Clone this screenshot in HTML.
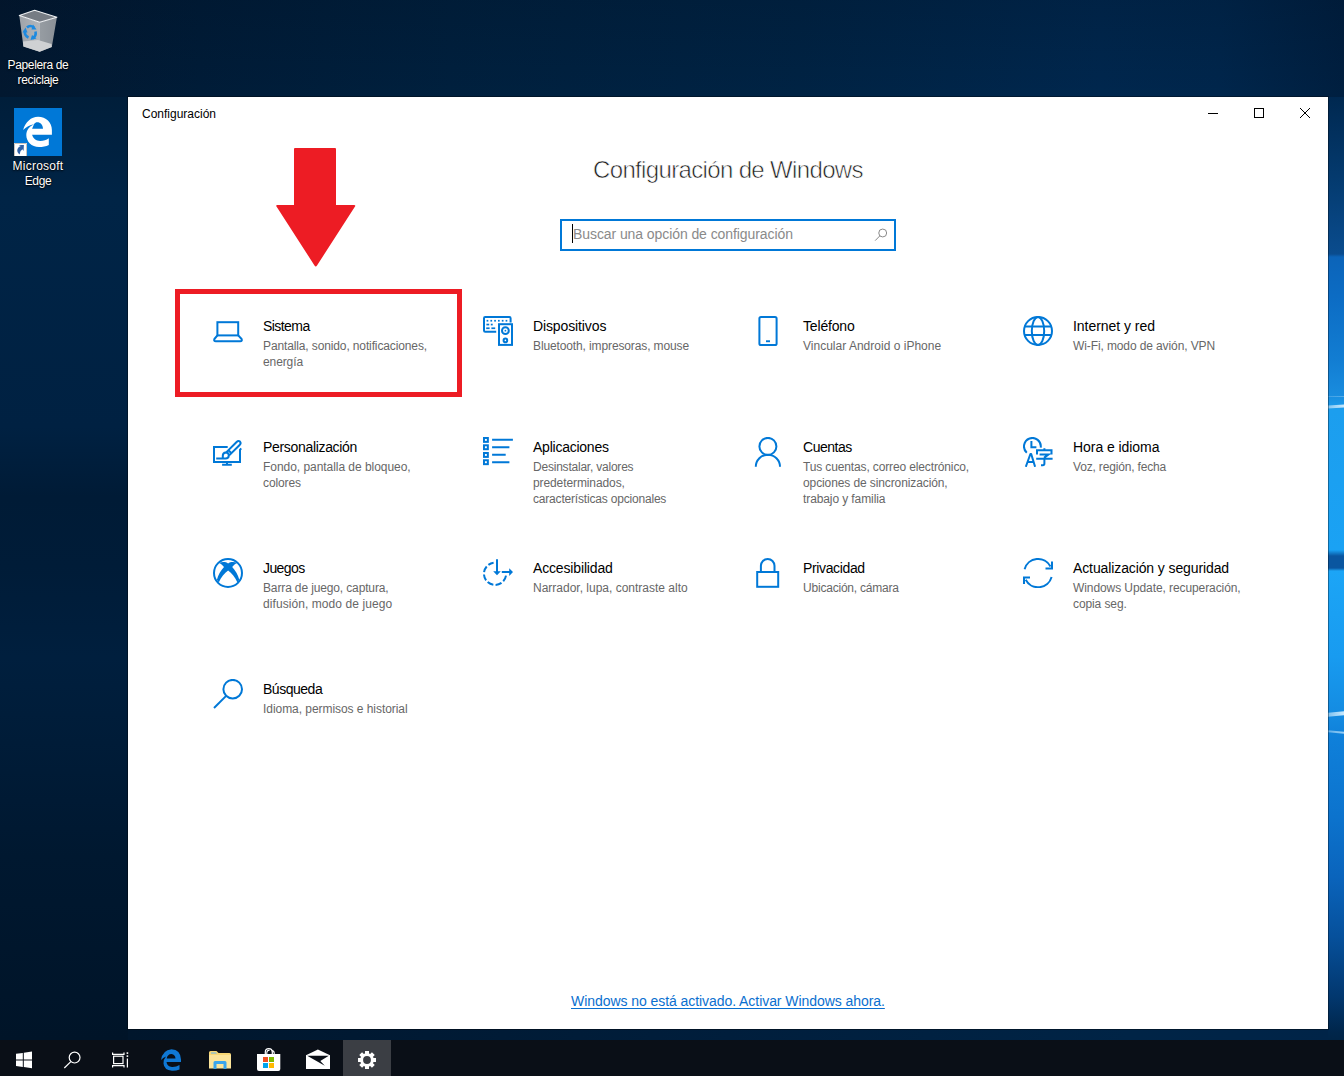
<!DOCTYPE html>
<html><head><meta charset="utf-8">
<style>
*{margin:0;padding:0;box-sizing:border-box}
html,body{width:1344px;height:1076px;overflow:hidden}
body{position:relative;font-family:"Liberation Sans",sans-serif;background:#04203f}
.abs{position:absolute}
#bg{position:absolute;left:0;top:0;width:1344px;height:1076px;background:#00203f}
#topstrip{position:absolute;left:0;top:0;width:1344px;height:97px;
 background:linear-gradient(180deg,rgba(0,6,16,0.14) 0%,rgba(0,0,0,0) 100%),
 linear-gradient(90deg,rgb(2,24,48) 0px,rgb(0,28,56) 200px,rgb(0,32,62) 450px,rgb(0,35,68) 800px,rgb(0,39,78) 1100px,rgb(0,38,76) 1220px,rgb(0,31,64) 1344px)}
#leftstrip{position:absolute;left:0;top:97px;width:128px;height:943px;
 background:linear-gradient(180deg,rgb(0,30,58) 0px,rgb(0,36,70) 100px,rgb(0,33,66) 330px,rgb(0,27,54) 400px,rgb(0,28,56) 470px,rgb(0,31,62) 560px,rgb(0,24,48) 760px,rgb(0,20,40) 943px)}
#botstrip{position:absolute;left:128px;top:1029px;width:1216px;height:11px;
 background:linear-gradient(90deg,rgb(0,22,44) 0px,rgb(0,30,60) 600px,rgb(0,36,70) 1000px,rgb(0,36,72) 1216px)}
#rstrip{position:absolute;left:1328px;top:97px;width:16px;height:943px;
 background:linear-gradient(180deg,rgb(0,40,80) 0px,rgb(4,58,110) 80px,rgb(10,76,142) 157px,rgb(12,100,185) 160px,rgb(12,108,196) 200px,rgb(18,125,210) 262px,rgb(25,140,222) 298px,rgb(28,158,238) 313px,rgb(26,162,244) 453px,rgb(10,86,160) 459px,rgb(10,86,160) 471px,rgb(28,165,246) 474px,rgb(24,155,240) 560px,rgb(20,140,226) 615px,rgb(15,128,218) 640px,rgb(12,115,205) 720px,rgb(10,100,188) 780px,rgb(6,80,155) 840px,rgb(2,55,110) 900px,rgb(0,38,75) 935px,rgb(0,36,70) 943px)}
.beam{position:absolute;left:1328px;width:16px;height:3px;background:linear-gradient(90deg,rgba(170,215,245,.7),rgba(210,238,255,.95))}
.dlabel{position:absolute;width:76px;left:0;text-align:center;color:#fff;font-size:12px;line-height:15px;letter-spacing:-0.35px;text-shadow:0 1px 2px rgba(0,0,0,.9),0 0 1px #000}
#win{position:absolute;left:128px;top:97px;width:1200px;height:932px;background:#fff;box-shadow:0 0 0 1px rgba(0,0,0,.35)}
.t{position:absolute;white-space:nowrap}
.gt{position:absolute;white-space:nowrap;font-size:14px;line-height:20px;color:#000;letter-spacing:-0.15px}
.gs{position:absolute;white-space:nowrap;font-size:12px;line-height:16px;color:#676767;letter-spacing:-0.1px}
#taskbar{position:absolute;left:0;top:1040px;width:1344px;height:36px;background:#0a0f17}
</style></head><body>
<div id="bg"></div>
<div id="topstrip"></div><div id="leftstrip"></div><div id="botstrip"></div><div id="rstrip"></div>
<div class="beam" style="top:405px;height:3px;transform:skewY(-4deg)"></div>
<div class="beam" style="top:396px;height:1px;opacity:.35"></div>
<div class="beam" style="top:712px;height:4px;transform:skewY(-6deg)"></div>
<div class="beam" style="top:731px;height:2px;opacity:.75;transform:skewY(5deg)"></div>

<!-- desktop icons -->
<svg class="abs" style="left:10px;top:4px" width="56" height="52" viewBox="10 4 56 52">
 <defs>
  <linearGradient id="binb" x1="0" y1="0" x2="1" y2="0"><stop offset="0" stop-color="#9ea3a9"/><stop offset="0.55" stop-color="#b3b7bc"/><stop offset="0.56" stop-color="#969ca2"/><stop offset="1" stop-color="#8a9097"/></linearGradient>
 </defs>
 <path d="M19.3 15.5L23.4 46.4L39.7 51.8L51.8 46.9L56.9 17.2L39.7 22.3Z" fill="url(#binb)"/>
 <path d="M23 41.5L38 40L51.5 44L51.8 46.9L39.7 51.8L23.4 46.4Z" fill="#cfd1d3"/>
 <path d="M19.3 15.5L34.6 10.2L56.9 17.2L39.7 22.3Z" fill="#767c84" stroke="#eef0f2" stroke-width="1.1" stroke-linejoin="round"/>
 <g fill="none" stroke="#1d8ae0" stroke-width="2.6">
  <path d="M27 27.5Q30 24.5 34 27.5"/>
  <path d="M35.5 31.5Q36.5 36 32.5 38.5"/>
  <path d="M28.5 37.5Q24 35.5 25 30.5"/>
 </g>
 <g fill="#1d8ae0"><path d="M33 24.5L36.5 29.5L31.5 29.5Z"/><path d="M36.5 38.5L30.5 40L32 35Z"/><path d="M22.5 32.5L25.5 27.5L27.5 32.5Z"/></g>
</svg>
<div class="dlabel" style="top:58px">Papelera de<br>reciclaje</div>
<div class="abs" style="left:14px;top:108px;width:48px;height:48px;background:#0078d7"></div>
<svg class="abs" style="left:14px;top:108px" width="48" height="48" viewBox="0 0 48 48">
 <path fill-rule="evenodd" d="M9.1 21.9C11.5 14 17 8.7 24.1 8.7C32 8.7 37.9 14.5 37.9 22V26.8H18.1C19 30.5 22 33 26.3 33C29.5 33 32.5 32 34.8 30.3V37C32 38.4 28.5 39 25 39C17.5 39 12.3 33.5 12.3 27C12.3 22.5 15 18.5 20 16.2C16 17 12 19 9.1 21.9ZM20 16.2C21 14.8 22 14.3 23.2 14.3C26.5 14.3 28.8 17 29 20.7H18.1Z" fill="#fff"/>
 <rect x="0" y="35" width="13" height="13" fill="#fff"/>
 <path d="M0.5 48V35.5H12.5V48" fill="none" stroke="#c9c3bd" stroke-width="1"/>
 <path d="M5.6 46.5Q2.5 44 3.5 41Q4.5 38.5 6.8 38L4.6 37H9.9L9.6 43L8.4 41.2Q6 42.5 5.6 46.5Z" fill="#2f62a8"/>
</svg>
<div class="dlabel" style="top:159px"><span style="letter-spacing:0.25px">Microsoft</span><br>Edge</div>

<!-- window -->
<div id="win"></div>
<div class="t" style="left:142px;top:106px;font-size:12px;line-height:16px;color:#000">Configuración</div>
<svg class="abs" style="left:1200px;top:100px" width="120" height="30" viewBox="0 0 120 30">
 <path d="M8 13.5H18" stroke="#000" stroke-width="1" fill="none"/>
 <rect x="54.5" y="8.5" width="9" height="9" stroke="#000" stroke-width="1" fill="none"/>
 <path d="M100 8L110 18M110 8L100 18" stroke="#000" stroke-width="1" fill="none"/>
</svg>
<div class="t" style="left:593px;top:155px;font-size:24px;line-height:30px;color:#1e1e1e;-webkit-text-stroke:0.6px #fff;letter-spacing:-0.65px">Configuración de Windows</div>
<div class="abs" style="left:560px;top:219px;width:336px;height:32px;border:2px solid #0078d7;background:#fff"></div>
<div class="abs" style="left:572px;top:224px;width:1px;height:19px;background:#000"></div>
<div class="t" style="left:573px;top:225px;font-size:14px;line-height:18px;color:#8a8a8a;letter-spacing:-0.08px">Buscar una opción de configuración</div>
<svg class="abs" style="left:872px;top:226px" width="18" height="18" viewBox="0 0 18 18">
 <circle cx="10.7" cy="7" r="3.95" stroke="#8a8a8a" stroke-width="1" fill="none"/>
 <path d="M7.9 9.8L3.2 14.6" stroke="#8a8a8a" stroke-width="1" fill="none"/>
</svg>
<svg class="abs" style="left:270px;top:144px" width="92" height="128" viewBox="270 144 92 128">
 <path d="M295 148H335Q336 148 336 149V205H354Q356 205 355 206.5L317 265.5Q315.7 267.5 314.5 265.5L276.5 206.5Q275.5 205 277.5 205H294V149Q294 148 295 148Z" fill="#ed1c24"/>
</svg>
<div class="abs" style="left:175px;top:289px;width:287px;height:108px;border:5px solid #ed1c24"></div>
<!--GRID-->
<svg class="abs" style="left:213px;top:316px" width="30" height="30" viewBox="0 0 30 30"><rect x="4.4" y="6.2" width="20.8" height="13.2" stroke="#0078d7" stroke-width="2" fill="none"/>
<path d="M4.4 19.4L1.4 23Q0.6 25.3 2.8 25.3H27.2Q29.4 25.3 28.6 23L25.2 19.4" stroke="#0078d7" stroke-width="2" fill="none" stroke-linejoin="round"/></svg>
<div class="gt" style="left:263px;top:316px"><span style="letter-spacing:-0.568px">Sistema</span></div>
<div class="gs" style="left:263px;top:338px"><span style="letter-spacing:-0.125px">Pantalla, sonido, notificaciones,</span><br><span style="letter-spacing:-0.1px">energía</span></div>
<svg class="abs" style="left:483px;top:316px" width="30" height="30" viewBox="0 0 30 30"><path d="M13.2 15.8H2.2Q1 15.8 1 14.6V2.2Q1 1 2.2 1H26.4Q27.6 1 27.6 2.2V6.4" stroke="#0078d7" stroke-width="2" fill="none"/>
<g fill="#0078d7"><rect x="3.6" y="3.9" width="1.7" height="1.7"/><rect x="7.4" y="3.9" width="1.7" height="1.7"/><rect x="11.2" y="3.9" width="1.7" height="1.7"/><rect x="15" y="3.9" width="1.7" height="1.7"/><rect x="18.8" y="3.9" width="1.7" height="1.7"/><rect x="22.6" y="3.9" width="1.7" height="1.7"/>
<rect x="3.4" y="7.7" width="2.8" height="1.7"/><rect x="7.8" y="7.7" width="1.9" height="1.7"/>
<rect x="3.2" y="11.4" width="3.4" height="1.7"/><rect x="8.4" y="11.4" width="3.8" height="1.7"/></g>
<rect x="16" y="8.2" width="13" height="20.7" stroke="#0078d7" stroke-width="2" fill="none"/>
<circle cx="22.4" cy="14.7" r="3.4" stroke="#0078d7" stroke-width="2" fill="none" stroke-width="1.8"/><circle cx="22.4" cy="14.7" r="0.9" fill="#0078d7"/>
<circle cx="22.4" cy="24.4" r="1.8" stroke="#0078d7" stroke-width="2" fill="none" stroke-width="1.7"/></svg>
<div class="gt" style="left:533px;top:316px"><span style="letter-spacing:-0.117px">Dispositivos</span></div>
<div class="gs" style="left:533px;top:338px"><span style="letter-spacing:-0.122px">Bluetooth, impresoras, mouse</span></div>
<svg class="abs" style="left:753px;top:316px" width="30" height="30" viewBox="0 0 30 30"><rect x="6.4" y="1" width="17.2" height="28" rx="1.6" stroke="#0078d7" stroke-width="2" fill="none"/>
<rect x="13" y="24.3" width="4" height="1.9" fill="#0078d7"/></svg>
<div class="gt" style="left:803px;top:316px"><span style="letter-spacing:-0.167px">Teléfono</span></div>
<div class="gs" style="left:803px;top:338px"><span style="letter-spacing:0.012px">Vincular Android o iPhone</span></div>
<svg class="abs" style="left:1023px;top:316px" width="30" height="30" viewBox="0 0 30 30"><circle cx="15" cy="15" r="14" stroke="#0078d7" stroke-width="2" fill="none"/><ellipse cx="15" cy="15" rx="6.2" ry="14" stroke="#0078d7" stroke-width="2" fill="none"/>
<path d="M1.5 10.6H28.5M1.5 19H28.5" stroke="#0078d7" stroke-width="2" fill="none"/></svg>
<div class="gt" style="left:1073px;top:316px"><span style="letter-spacing:-0.036px">Internet y red</span></div>
<div class="gs" style="left:1073px;top:338px"><span style="letter-spacing:-0.109px">Wi-Fi, modo de avión, VPN</span></div>
<svg class="abs" style="left:213px;top:437px" width="30" height="30" viewBox="0 0 30 30"><path d="M14.7 10.1H1V25H27V12.8L28.2 11.4" stroke="#0078d7" stroke-width="2" fill="none"/>
<path d="M14 25V27.8M9.1 27.8H18.8" stroke="#0078d7" stroke-width="2" fill="none"/>
<path d="M13.2 15.4L23.6 5Q25.4 3.2 27 4.6Q28.4 6.2 26.6 8L16.2 18.4" stroke="#0078d7" stroke-width="2" fill="none"/>
<path d="M15.4 13.2L18.2 16" stroke="#0078d7" stroke-width="2" fill="none"/>
<path d="M3.2 21.4H12.6Q15.6 21.4 15.8 18.6Q15.8 15.4 12.8 15.4Q9.8 15.6 9.8 18.8V21.4" stroke="#0078d7" stroke-width="2" fill="none"/></svg>
<div class="gt" style="left:263px;top:437px"><span style="letter-spacing:-0.323px">Personalización</span></div>
<div class="gs" style="left:263px;top:459px"><span style="letter-spacing:-0.044px">Fondo, pantalla de bloqueo,</span><br><span style="letter-spacing:-0.1px">colores</span></div>
<svg class="abs" style="left:483px;top:437px" width="30" height="30" viewBox="0 0 30 30"><g stroke="#0078d7" stroke-width="2" fill="none" stroke-width="1.9"><rect x="0.95" y="0.95" width="3.9" height="3.9"/><rect x="0.95" y="8.3" width="3.9" height="3.9"/><rect x="0.95" y="16" width="3.9" height="3.9"/><rect x="0.95" y="23.25" width="3.9" height="3.9"/></g>
<path d="M9.1 2.8H29.9M9.1 10.2H26.4M9.1 17.7H22.7M9.1 25.3H26.4" stroke="#0078d7" stroke-width="2" fill="none"/></svg>
<div class="gt" style="left:533px;top:437px"><span style="letter-spacing:-0.242px">Aplicaciones</span></div>
<div class="gs" style="left:533px;top:459px"><span style="letter-spacing:-0.216px">Desinstalar, valores</span><br><span style="letter-spacing:-0.1px">predeterminados,</span><br><span style="letter-spacing:-0.188px">características opcionales</span></div>
<svg class="abs" style="left:753px;top:437px" width="30" height="30" viewBox="0 0 30 30"><circle cx="14.9" cy="9.4" r="8.5" stroke="#0078d7" stroke-width="2" fill="none"/><path d="M2.8 29.8A12.1 12.1 0 0 1 27 29.8" stroke="#0078d7" stroke-width="2" fill="none"/></svg>
<div class="gt" style="left:803px;top:437px"><span style="letter-spacing:-0.479px">Cuentas</span></div>
<div class="gs" style="left:803px;top:459px"><span style="letter-spacing:-0.135px">Tus cuentas, correo electrónico,</span><br><span style="letter-spacing:-0.105px">opciones de sincronización,</span><br><span style="letter-spacing:-0.1px">trabajo y familia</span></div>
<svg class="abs" style="left:1023px;top:437px" width="30" height="30" viewBox="0 0 30 30"><path d="M3.78 15.64A8.4 8.4 0 1 1 17.72 10.57" stroke="#0078d7" stroke-width="2" fill="none"/>
<path d="M8.4 3.9V10.2H13.4" stroke="#0078d7" stroke-width="2" fill="none"/>
<path d="M2.8 29.8L7.4 17H8.2L12.1 29.8M4.6 25.1H10.4" stroke="#0078d7" stroke-width="2" fill="none" stroke-linejoin="round"/>
<path d="M21.4 11.3V13.2M14 17.4V13.2H28.5V17.4M16.6 17.4H25.5L21.2 20.6M13.2 21.8H29.6M21.4 20.6V26.6Q21.4 28.2 19.8 28.2H18" stroke="#0078d7" stroke-width="2" fill="none"/></svg>
<div class="gt" style="left:1073px;top:437px"><span style="letter-spacing:-0.058px">Hora e idioma</span></div>
<div class="gs" style="left:1073px;top:459px"><span style="letter-spacing:-0.171px">Voz, región, fecha</span></div>
<svg class="abs" style="left:213px;top:558px" width="30" height="30" viewBox="0 0 30 30"><circle cx="15" cy="15" r="14" stroke="#0078d7" stroke-width="2" fill="none"/>
<path d="M15.1 5.4C12.8 3.8 9 3.6 6.2 5C8 6 10 7.5 11 9.1C8 12.5 5 17 3.9 21.8L5.8 24.4C8 19.5 11.5 15 15.1 12.5C18.7 15 22.2 19.5 24.4 24.4L26.3 21.8C25.2 17 22.2 12.5 19.2 9.1C20.2 7.5 22.2 6 24 5C21.2 3.6 17.4 3.8 15.1 5.4Z" fill="#0078d7"/></svg>
<div class="gt" style="left:263px;top:558px"><span style="letter-spacing:-0.593px">Juegos</span></div>
<div class="gs" style="left:263px;top:580px"><span style="letter-spacing:-0.135px">Barra de juego, captura,</span><br><span style="letter-spacing:0.077px">difusión, modo de juego</span></div>
<svg class="abs" style="left:483px;top:558px" width="30" height="30" viewBox="0 0 30 30"><path d="M23.0 17.7A11.1 11.1 0 1 1 10.6 4.8" stroke="#0078d7" stroke-width="2" fill="none" stroke-dasharray="6.3 2.3"/>
<path d="M14 1.3V14M18.8 14.1H27" stroke="#0078d7" stroke-width="2" fill="none"/>
<path d="M10.2 13.2H17.8L14 17.2Z M26.2 10.2L30 14.1L26.2 18Z" fill="#0078d7"/></svg>
<div class="gt" style="left:533px;top:558px"><span style="letter-spacing:-0.155px">Accesibilidad</span></div>
<div class="gs" style="left:533px;top:580px"><span style="letter-spacing:-0.002px">Narrador, lupa, contraste alto</span></div>
<svg class="abs" style="left:753px;top:558px" width="30" height="30" viewBox="0 0 30 30"><path d="M7.9 14V7.8A6.8 6.8 0 0 1 21.5 7.8V14" stroke="#0078d7" stroke-width="2" fill="none"/><rect x="4.2" y="14" width="21" height="14.8" stroke="#0078d7" stroke-width="2" fill="none"/></svg>
<div class="gt" style="left:803px;top:558px"><span style="letter-spacing:-0.358px">Privacidad</span></div>
<div class="gs" style="left:803px;top:580px"><span style="letter-spacing:-0.21px">Ubicación, cámara</span></div>
<svg class="abs" style="left:1023px;top:558px" width="30" height="30" viewBox="0 0 30 30"><path d="M1.6 11.3A14 14 0 0 1 27.5 8.5" stroke="#0078d7" stroke-width="2" fill="none"/><path d="M29 3.5V10.4H22.5" stroke="#0078d7" stroke-width="2" fill="none"/>
<path d="M28.6 19A14 14 0 0 1 2.7 21.7" stroke="#0078d7" stroke-width="2" fill="none"/><path d="M1 26V19.6H7" stroke="#0078d7" stroke-width="2" fill="none"/></svg>
<div class="gt" style="left:1073px;top:558px"><span style="letter-spacing:-0.111px">Actualización y seguridad</span></div>
<div class="gs" style="left:1073px;top:580px"><span style="letter-spacing:-0.086px">Windows Update, recuperación,</span><br><span style="letter-spacing:-0.1px">copia seg.</span></div>
<svg class="abs" style="left:213px;top:679px" width="30" height="30" viewBox="0 0 30 30"><circle cx="19.7" cy="10.2" r="9.3" stroke="#0078d7" stroke-width="2" fill="none"/><path d="M12.9 17.1L1 29" stroke="#0078d7" stroke-width="2" fill="none"/></svg>
<div class="gt" style="left:263px;top:679px"><span style="letter-spacing:-0.483px">Búsqueda</span></div>
<div class="gs" style="left:263px;top:701px"><span style="letter-spacing:-0.052px">Idioma, permisos e historial</span></div>
<!--/GRID-->
<div class="t" style="left:571px;top:992px;font-size:14px;line-height:18px;color:#0a6fcf;letter-spacing:-0.06px;text-decoration:underline;text-underline-offset:2px">Windows no está activado. Activar Windows ahora.</div>


<!-- taskbar -->
<div id="taskbar"></div>
<svg class="abs" style="left:0;top:1040px" width="400" height="36" viewBox="0 1040 400 36">
 <rect x="343" y="1040" width="48" height="36" fill="#3b3e44"/>
 <g fill="#fff">
  <path d="M16 1053.8L22.8 1052.9V1059.4H16Z"/><path d="M23.8 1052.8L32 1051.6V1059.4H23.8Z"/>
  <path d="M16 1060.4H22.8V1067L16 1066.1Z"/><path d="M23.8 1060.4H32V1068.2L23.8 1067.1Z"/>
 </g>
 <g stroke="#fff" stroke-width="1.2" fill="none">
  <circle cx="74.6" cy="1057.6" r="5.4"/><path d="M70.8 1061.6L64.3 1068"/>
  <path d="M112.6 1052.5V1054.4H124V1052.5M112.6 1067.5V1065.6H124V1067.5"/>
  <rect x="113.6" y="1056.2" width="9.4" height="7.4"/>
  <path d="M127.4 1058.5V1067.5"/>
 </g>
 <rect x="126.6" y="1052.3" width="1.6" height="1.6" fill="#fff"/><rect x="126.6" y="1055.3" width="1.6" height="1.6" fill="#fff"/>
 <path d="M161 1060Q162.5 1050 171.5 1049.2Q180.5 1049.5 181 1059.5V1062H166.5Q167 1066.5 172 1067Q176 1067.2 179.5 1065V1069.5Q176 1071 172 1070.8Q164 1070 163.5 1063.5Q163.2 1059.5 166 1056.5Q163 1057.5 161 1060ZM166.7 1058.5H175.5Q175.3 1054.5 171.5 1054Q167.5 1054 166.7 1058.5Z" fill="#0f78d4"/>
 <path d="M209 1052.5Q209 1051 210.5 1051H216.5L218.5 1053H229.5Q231 1053 231 1054.5V1068H209Z" fill="#f8d775"/>
 <path d="M209 1055H231V1068.5H209Z" fill="#fce49a"/>
 <path d="M211 1052.5H216L217 1053.5H211Z" fill="#65b6f2"/>
 <path d="M213.5 1069V1062.5Q213.5 1061 215 1061H225Q226.5 1061 226.5 1062.5V1069H223.5V1064H216.5V1069Z" fill="#3aa5ec"/>
 <path d="M257 1054H280.3V1069Q280.3 1071 278.3 1071H259Q257 1071 257 1069Z" fill="#fff"/>
 <path d="M265.3 1054V1052Q265.3 1048.6 268.8 1048.6Q272.3 1048.6 272.3 1052V1054" stroke="#fff" stroke-width="1.2" fill="none"/>
 <path d="M266.8 1054V1052.6Q267 1050.2 269.6 1050.1M271.6 1050.6Q274.2 1050.6 274.2 1053V1054" stroke="#fff" stroke-width="1.1" fill="none"/>
 <rect x="263" y="1057" width="5" height="5" fill="#f25022"/><rect x="269" y="1057" width="5" height="5" fill="#7fba00"/>
 <rect x="263" y="1063" width="5" height="5" fill="#00a4ef"/><rect x="269" y="1063" width="5" height="5" fill="#ffb900"/>
 <path d="M306 1055.3L317.9 1049.6L330 1055.3V1069H306Z" fill="#fff"/>
 <path d="M307.2 1055.8H328.8L320.3 1061.1L324.8 1065.8Z" fill="#0a0f17"/>
</svg>
<svg class="abs" style="left:356px;top:1049px" width="22" height="22" viewBox="-11 -11 22 22">
 <path id="gear" fill="#fff" fill-rule="evenodd" d="M6.50 -2.01 L8.98 -2.01 L8.98 2.01 L6.50 2.01 L6.01 3.17 L7.77 4.93 L4.93 7.77 L3.17 6.01 L2.01 6.50 L2.01 8.98 L-2.01 8.98 L-2.01 6.50 L-3.17 6.01 L-4.93 7.77 L-7.77 4.93 L-6.01 3.17 L-6.50 2.01 L-8.98 2.01 L-8.98 -2.01 L-6.50 -2.01 L-6.01 -3.17 L-7.77 -4.93 L-4.93 -7.77 L-3.17 -6.01 L-2.01 -6.50 L-2.01 -8.98 L2.01 -8.98 L2.01 -6.50 L3.17 -6.01 L4.93 -7.77 L7.77 -4.93 L6.01 -3.17Z M3.9 0 A3.9 3.9 0 1 0 -3.9 0 A3.9 3.9 0 1 0 3.9 0Z"/>
</svg>
</body></html>
